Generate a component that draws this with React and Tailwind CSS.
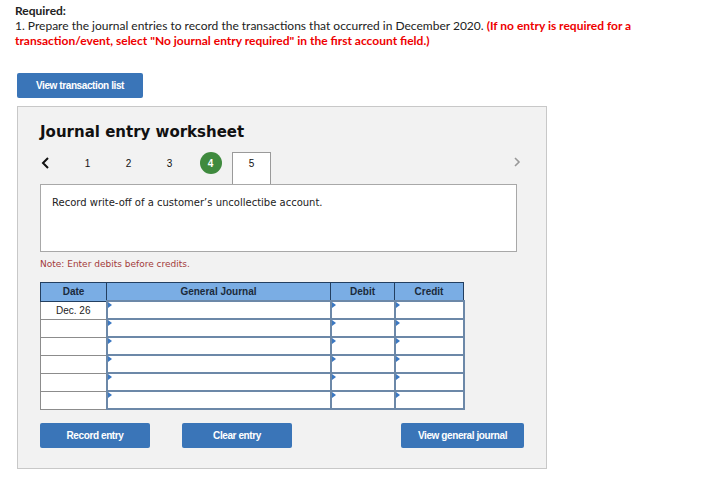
import React from 'react';

const rows = ["Dec. 26", "", "", "", "", ""];

const InputCell = ({ w }) => (
  <td className={`${w} h-[18px] p-0 border-2 border-[#6c88a8] bg-white relative`}>
    <span className="absolute left-0 top-0 w-0 h-0 border-t-[3px] border-b-[3px] border-l-[4px] border-t-transparent border-b-transparent border-l-[#3b78c2]" />
  </td>
);

const BlueButton = ({ label, w }) => (
  <button className={`${w} h-[25px] rounded-[2px] bg-[#3a75b8] text-white text-[10px] font-bold tracking-[-0.4px] font-['Liberation_Sans',sans-serif]`}>
    {label}
  </button>
);

const Step = ({ children, cls = "w-[41px]" }) => (
  <div className={`${cls} h-[32px] flex justify-center`}>
    <div className="h-[22px] flex items-center">{children}</div>
  </div>
);

export default function App() {
  return (
    <div className="w-[720px] h-[488px] bg-white pl-[15px] pt-[3px] font-['Lato',sans-serif] text-[#222]">
      <div className="text-[12px] leading-[15px]">
        <div className="font-bold">Required:</div>
        <div>1. Prepare the journal entries to record the transactions that occurred in December 2020. <span className="font-bold text-[#e00]">(If no entry is required for a</span></div>
        <div className="font-bold text-[#e00]">transaction/event, select "No journal entry required" in the first account field.)</div>
      </div>

      <div className="mt-[25px] ml-[2px] flex">
        <BlueButton label="View transaction list" w="w-[126px] h-[24px]" />
      </div>

      <div className="mt-[8px] ml-[2px] w-[530px] h-[363px] border border-[#c8c8c8] bg-[#f2f2f2] pl-[22px] pt-[16px]">
        <h2 className="text-[15px] font-bold text-[#111] font-['DejaVu_Sans',sans-serif] leading-[18px]">Journal entry worksheet</h2>

        <div className="mt-[11px] flex w-[484px] h-[32px] font-['Liberation_Sans',sans-serif] text-[10px] text-[#111]">
          <div className="w-[27px] h-[22px] flex items-center pl-[1px]">
            <svg width="10" height="12" viewBox="0 0 10 12"><path d="M7 1 L2 6 L7 11" stroke="#111" strokeWidth="2" fill="none" /></svg>
          </div>
          <Step>1</Step>
          <Step>2</Step>
          <Step>3</Step>
          <Step>
            <span className="w-[22px] h-[22px] rounded-full bg-[#3f8a3e] text-white font-bold flex items-center justify-center">4</span>
          </Step>
          <div className="ml-[1px] w-[39px] h-[32px] border border-b-0 border-[#9a9a9a] bg-white flex justify-center">
            <div className="h-[21px] flex items-center">5</div>
          </div>
          <div className="flex-1 h-[20px] flex items-center justify-end pr-[3px]">
            <svg width="8" height="12" viewBox="0 0 8 12"><path d="M2 2 L6 6 L2 10" stroke="#999" strokeWidth="1.6" fill="none" /></svg>
          </div>
        </div>

        <div className="w-[477px] h-[68px] border border-[#a8a8a8] bg-white pl-[11px] pt-[10px] text-[10px] text-[#222] font-['DejaVu_Sans',sans-serif]">
          Record write-off of a customer’s uncollectibe account.
        </div>

        <div className="mt-[6px] text-[9px] text-[#a33a3a] font-['DejaVu_Sans',sans-serif]">Note: Enter debits before credits.</div>

        <table className="mt-[10px] border-collapse font-['Liberation_Sans',sans-serif] text-[10px]">
          <thead>
            <tr className="bg-[#7aade4] h-[19px] text-[#1b2a3b]">
              <th className="w-[66px] border border-[#233f60] font-bold">Date</th>
              <th className="w-[224px] border border-[#233f60] font-bold">General Journal</th>
              <th className="w-[64px] border border-[#233f60] font-bold">Debit</th>
              <th className="w-[69px] border border-[#233f60] font-bold">Credit</th>
            </tr>
          </thead>
          <tbody>
            {rows.map((d, i) => (
              <tr key={i}>
                <td className="w-[66px] h-[18px] border border-[#8c8c8c] bg-white text-center text-[#222]">{d}</td>
                <InputCell w="w-[224px]" />
                <InputCell w="w-[64px]" />
                <InputCell w="w-[69px]" />
              </tr>
            ))}
          </tbody>
        </table>

        <div className="mt-[13px] flex w-[484px]">
          <BlueButton label="Record entry" w="w-[110px]" />
          <div className="ml-[32px] flex"><BlueButton label="Clear entry" w="w-[110px]" /></div>
          <div className="ml-auto flex"><BlueButton label="View general journal" w="w-[123px]" /></div>
        </div>
      </div>
    </div>
  );
}
